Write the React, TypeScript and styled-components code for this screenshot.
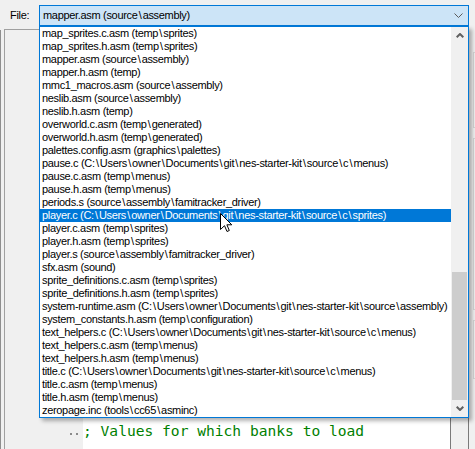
import React from "react";
import styled, { createGlobalStyle } from "styled-components";

const Global = createGlobalStyle`
  html, body { margin: 0; padding: 0; background: #f0f0f0; }
  #root { width: 475px; height: 449px; overflow: hidden; }
`;

const Window = styled.div`
  position: relative;
  width: 475px;
  height: 449px;
  display: grid;
  grid-template-rows: 29px 1fr;
  background: #f0f0f0;
  font-family: "Liberation Sans", Arial, sans-serif;
  font-size: 11px;
  letter-spacing: -0.32px;
  color: #000;
  overflow: hidden;
`;

const Header = styled.div`
  display: flex;
  align-items: flex-start;
  padding: 5px 0 0 10px;
`;

const Label = styled.label`
  width: 29px;
  line-height: 21px;
`;

const Combo = styled.div`
  position: relative;
  box-sizing: border-box;
  width: 430px;
  height: 21px;
  border: 1px solid #0078d7;
  background: #cce4f7;
  display: flex;
  align-items: center;
  padding: 0 3px 0 3px;
  line-height: 19px;
  z-index: 2;
`;

const ComboText = styled.span`
  flex: 1;
  white-space: nowrap;
`;

const DropList = styled.div`
  position: absolute;
  top: calc(100% + 1px);
  left: -1px;
  box-sizing: border-box;
  width: 430px;
  height: 392px;
  border: 1px solid #0078d7;
  background: #fff;
  display: flex;
  box-shadow: 3px 3px 4px rgba(0, 0, 0, 0.3);
`;

const Rows = styled.div`
  flex: 1;
  display: flex;
  flex-direction: column;
  overflow: hidden;
`;

const Row = styled.div<{ $selected?: boolean }>`
  height: 13px;
  line-height: 13px;
  padding-left: 2px;
  white-space: nowrap;
  overflow: hidden;
  background: ${(p) => (p.$selected ? "#0078d7" : "transparent")};
  color: ${(p) => (p.$selected ? "#fff" : "#000")};
`;

const Slash = styled.span`
  padding: 0 1.2px;
`;

const ScrollBar = styled.div`
  width: 17px;
  background: #f0f0f0;
  display: flex;
  flex-direction: column;
`;

const ScrollButton = styled.div`
  height: 17px;
  display: flex;
  align-items: center;
  justify-content: center;
`;

const Track = styled.div`
  flex: 1;
  display: flex;
  flex-direction: column;
  justify-content: flex-end;
`;

const Thumb = styled.div`
  height: 128px;
  margin: 0 1px;
  background: #cdcdcd;
`;

const Workspace = styled.div`
  display: flex;
  min-height: 0;
`;

const LeftEdge = styled.div`
  width: 4px;
  box-sizing: border-box;
  border-left: 1px solid #8e8e8e;
  margin-top: 1px;
`;

const EditorFrame = styled.div`
  display: flex;
  width: 465px;
  box-sizing: border-box;
  border-top: 1px solid #a0a0a0;
  border-left: 1px solid #a0a0a0;
`;

const Gutter = styled.div`
  width: 78px;
  background: #f0f0f0;
  display: flex;
  flex-direction: column;
  justify-content: flex-end;
  align-items: flex-end;
  padding-bottom: 14px;
  box-sizing: border-box;
`;

const Dots = styled.div`
  display: flex;
  gap: 4px;
  margin-right: 5px;
`;

const Dot = styled.span`
  width: 2px;
  height: 2px;
  background: #8a8a8a;
`;

const Code = styled.div`
  width: 368px;
  box-sizing: border-box;
  background: #fff;
  border-right: 1px solid #7a7a7a;
  display: flex;
  flex-direction: column;
  justify-content: flex-end;
  padding-bottom: 9px;
`;

const CodeLine = styled.div`
  font-family: "DejaVu Sans Mono", "Liberation Mono", monospace;
  font-size: 14.6px;
  letter-spacing: 0;
  line-height: 19px;
  color: #008000;
  white-space: pre;
`;

const EditorScroll = styled.div`
  width: 18px;
  box-sizing: border-box;
  border-right: 1px solid #7a7a7a;
  background: #f0f0f0;
`;

const RightStrip = styled.div`
  width: 6px;
  display: flex;
  flex-direction: column;
  padding-top: 23px;
  gap: 10px;
`;

const Pane = styled.div<{ $h: number }>`
  height: ${(p) => p.$h}px;
  margin-left: 4px;
  box-sizing: border-box;
  border: 1px solid #d6d6d6;
  border-right: none;
`;

const Cursor = styled.svg`
  position: absolute;
  left: 220px;
  top: 213px;
  z-index: 5;
`;

const items = [
  "map_sprites.c.asm (temp\\sprites)",
  "map_sprites.h.asm (temp\\sprites)",
  "mapper.asm (source\\assembly)",
  "mapper.h.asm (temp)",
  "mmc1_macros.asm (source\\assembly)",
  "neslib.asm (source\\assembly)",
  "neslib.h.asm (temp)",
  "overworld.c.asm (temp\\generated)",
  "overworld.h.asm (temp\\generated)",
  "palettes.config.asm (graphics\\palettes)",
  "pause.c (C:\\Users\\owner\\Documents\\git\\nes-starter-kit\\source\\c\\menus)",
  "pause.c.asm (temp\\menus)",
  "pause.h.asm (temp\\menus)",
  "periods.s (source\\assembly\\famitracker_driver)",
  "player.c (C:\\Users\\owner\\Documents\\git\\nes-starter-kit\\source\\c\\sprites)",
  "player.c.asm (temp\\sprites)",
  "player.h.asm (temp\\sprites)",
  "player.s (source\\assembly\\famitracker_driver)",
  "sfx.asm (sound)",
  "sprite_definitions.c.asm (temp\\sprites)",
  "sprite_definitions.h.asm (temp\\sprites)",
  "system-runtime.asm (C:\\Users\\owner\\Documents\\git\\nes-starter-kit\\source\\assembly)",
  "system_constants.h.asm (temp\\configuration)",
  "text_helpers.c (C:\\Users\\owner\\Documents\\git\\nes-starter-kit\\source\\c\\menus)",
  "text_helpers.c.asm (temp\\menus)",
  "text_helpers.h.asm (temp\\menus)",
  "title.c (C:\\Users\\owner\\Documents\\git\\nes-starter-kit\\source\\c\\menus)",
  "title.c.asm (temp\\menus)",
  "title.h.asm (temp\\menus)",
  "zeropage.inc (tools\\cc65\\asminc)",
];

const SELECTED = 14;

function PathText({ text }: { text: string }) {
  const parts = text.split("\\");
  return (
    <>
      {parts.map((p, i) => (
        <React.Fragment key={i}>
          {i > 0 && <Slash>\</Slash>}
          {p}
        </React.Fragment>
      ))}
    </>
  );
}

export default function App() {
  return (
    <>
      <Global />
      <Window>
        <Header>
          <Label>File:</Label>
          <Combo>
            <ComboText>
              <PathText text="mapper.asm (source\assembly)" />
            </ComboText>
            <svg width="9" height="5" viewBox="0 0 9 5" style={{ marginRight: 2 }}>
              <path d="M0.5 0.5 L4.5 4.5 L8.5 0.5" fill="none" stroke="#5a5a5a" strokeWidth="1" />
            </svg>
            <DropList>
              <Rows>
                {items.map((t, i) => (
                  <Row key={t} $selected={i === SELECTED}>
                    <PathText text={t} />
                  </Row>
                ))}
              </Rows>
              <ScrollBar>
                <ScrollButton>
                  <svg width="8" height="5" viewBox="0 0 8 5">
                    <path d="M0.7 4.3 L4 1 L7.3 4.3" fill="none" stroke="#606060" strokeWidth="2" />
                  </svg>
                </ScrollButton>
                <Track>
                  <Thumb />
                </Track>
                <ScrollButton>
                  <svg width="8" height="5" viewBox="0 0 8 5">
                    <path d="M0.7 0.7 L4 4 L7.3 0.7" fill="none" stroke="#606060" strokeWidth="2" />
                  </svg>
                </ScrollButton>
              </ScrollBar>
            </DropList>
          </Combo>
        </Header>
        <Workspace>
          <LeftEdge />
          <EditorFrame>
            <Gutter>
              <Dots>
                <Dot />
                <Dot />
              </Dots>
            </Gutter>
            <Code>
              <CodeLine>; Values for which banks to load</CodeLine>
            </Code>
            <EditorScroll />
          </EditorFrame>
          <RightStrip>
            <Pane $h={76} />
            <Pane $h={172} />
            <Pane $h={59} />
          </RightStrip>
        </Workspace>
        <Cursor width="13" height="20" viewBox="0 0 13 20">
          <path
            d="M0.5 0.5 L0.5 16.5 L4.5 12.7 L7 18.5 L9.3 17.5 L6.9 11.8 L11.8 11.8 Z"
            fill="#fff"
            stroke="#000"
            strokeWidth="1"
            strokeLinejoin="miter"
          />
        </Cursor>
      </Window>
    </>
  );
}
